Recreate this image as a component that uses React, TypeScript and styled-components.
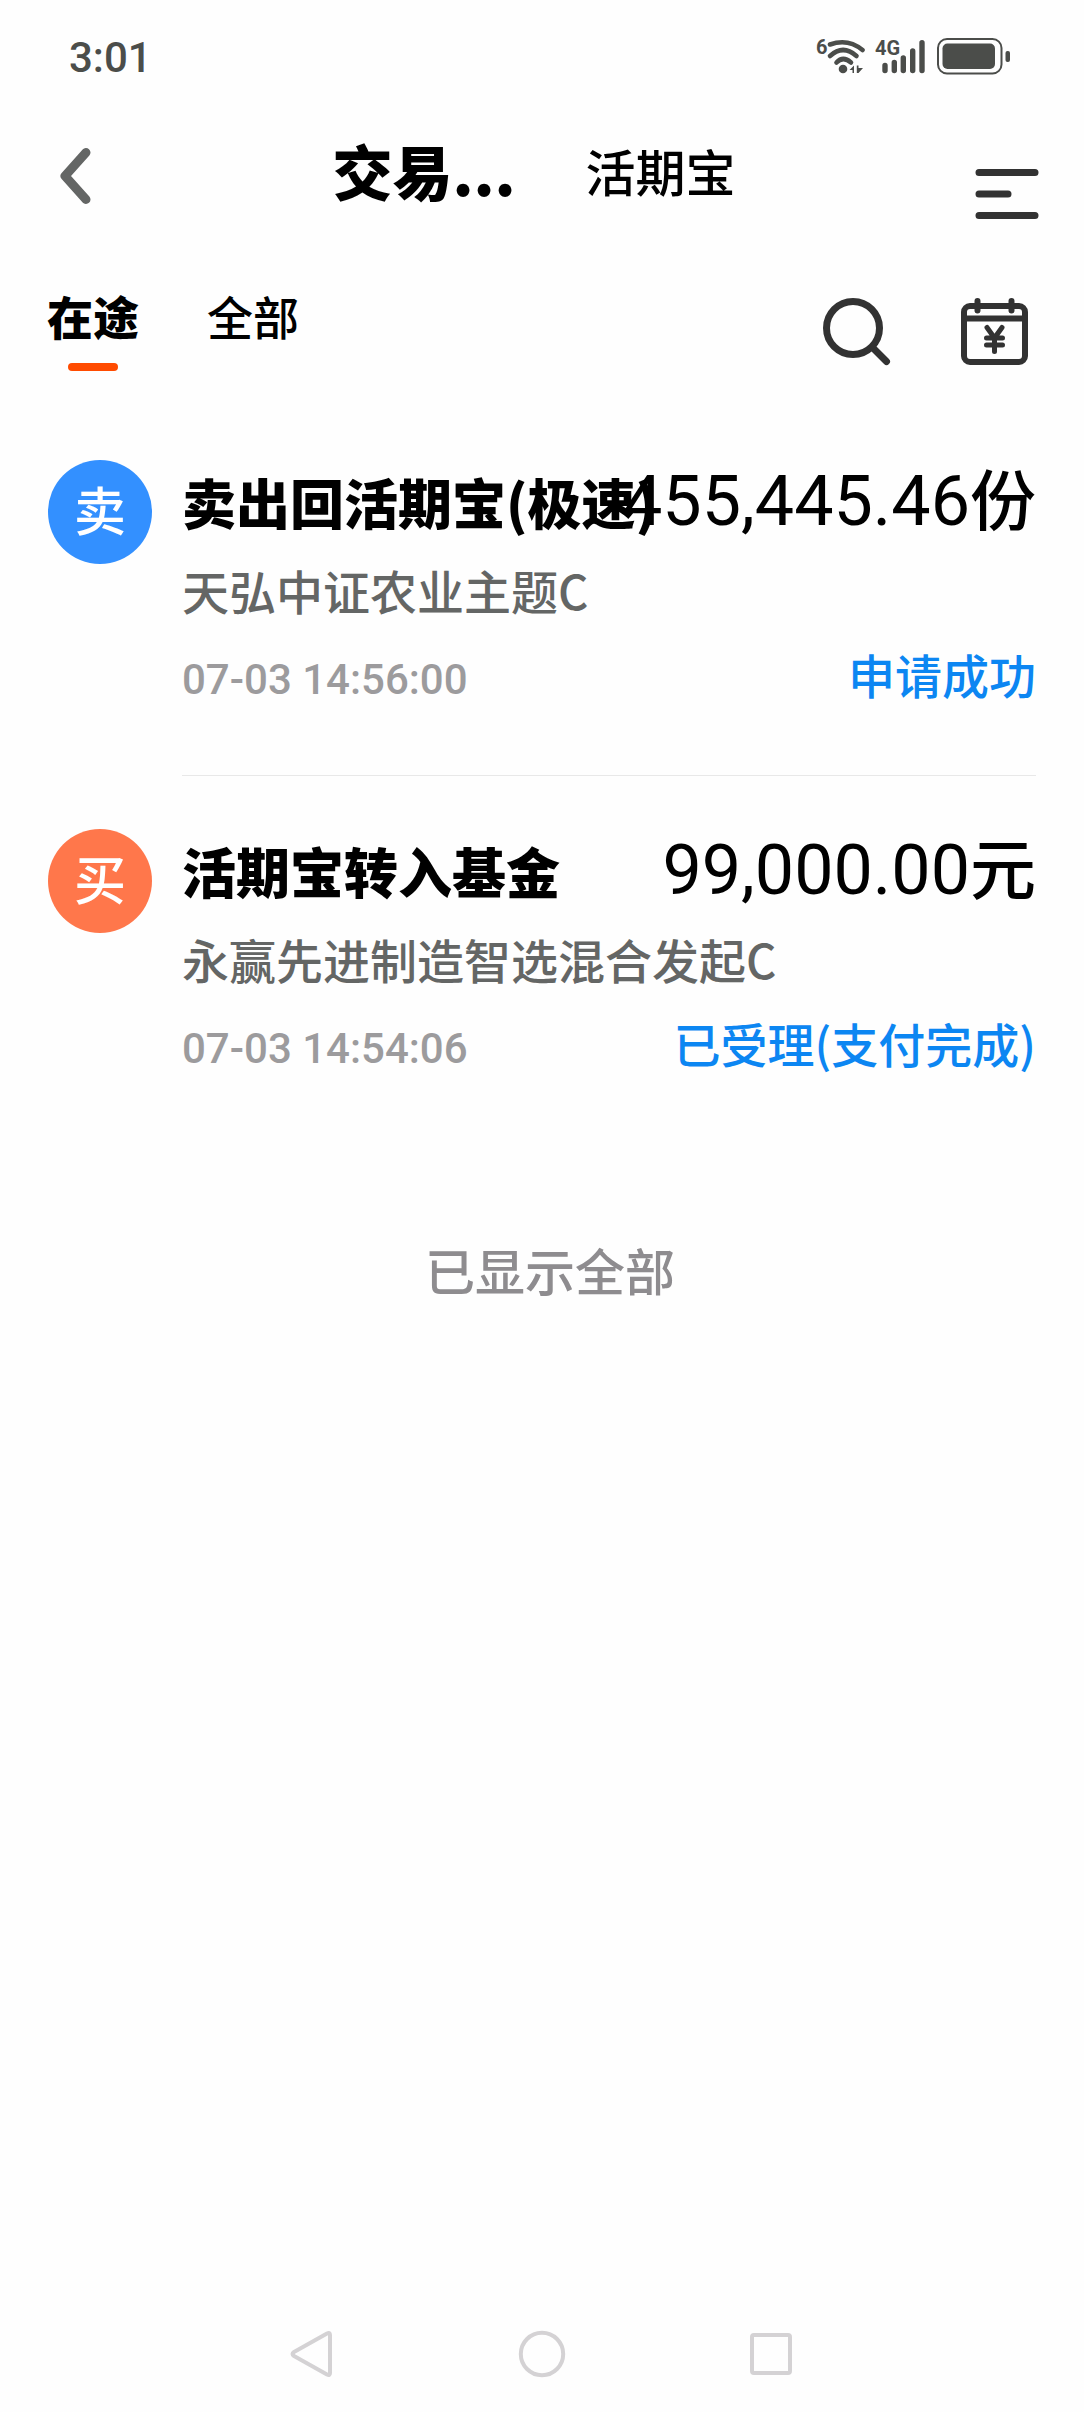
import React from "react";
import styled, { createGlobalStyle } from "styled-components";

const cjk = `"Noto Sans CJK SC", "Noto Sans", sans-serif`;
const latin = `Roboto, "Noto Sans CJK SC", sans-serif`;

const GlobalStyle = createGlobalStyle`
  * { box-sizing: border-box; }
  body { margin: 0; background: #fefefe; color: #000; font-family: ${cjk}; font-weight: 500; }
  button { margin: 0; padding: 0; border: 0; background: none; color: inherit; font: inherit; cursor: pointer; }
  ul { margin: 0; padding: 0; list-style: none; }
  svg { display: block; }
`;

const Page = styled.div`
  display: flex;
  flex-direction: column;
  min-height: 100vh;
`;

const StatusBar = styled.div`
  display: flex;
  align-items: center;
  justify-content: space-between;
  height: 112px;
  padding: 0 74px 0 69px;
  color: #4b4d4a;
`;

const Clock = styled.time`
  padding-top: 4px;
  font: 500 42px/48px ${latin};
`;

const Header = styled.header`
  display: grid;
  grid-template-columns: 1fr auto 1fr;
  align-items: end;
  height: 118px;
  padding: 0 45px 0 29px;
`;

const HeaderButton = styled.button<{ $height: number; $end?: boolean }>`
  display: flex;
  align-items: center;
  justify-self: ${(p) => (p.$end ? "end" : "start")};
  height: ${(p) => p.$height}px;
  padding-left: ${(p) => (p.$end ? 0 : 30)}px;
`;

const Sections = styled.div`
  display: flex;
  align-items: center;
  align-self: stretch;
  gap: 70px;
  padding-bottom: 2px;
`;

const Section = styled.button<{ $active?: boolean }>`
  font-size: ${(p) => (p.$active ? 60 : 50)}px;
  font-weight: ${(p) => (p.$active ? 900 : 500)};
  line-height: 72px;
  white-space: nowrap;
`;

const FilterBar = styled.div`
  display: flex;
  align-items: flex-start;
  justify-content: space-between;
  padding: 52px 56px 0 47px;
`;

const Filters = styled.div`
  display: flex;
  gap: 68px;
`;

const Filter = styled.button<{ $active?: boolean }>`
  display: flex;
  flex-direction: column;
  align-items: center;
  font-size: 46px;
  line-height: 66px;
  font-weight: ${(p) => (p.$active ? 900 : 500)};

  &::after {
    content: "";
    width: 50px;
    height: 8px;
    margin-top: 15px;
    border-radius: 4px;
    background: ${(p) => (p.$active ? "#ff4b00" : "transparent")};
  }
`;

const Tools = styled.div`
  display: flex;
  gap: 70px;
`;

const Tool = styled.button`
  display: flex;
  align-items: center;
  height: 100px;
`;

const Records = styled.ul`
  padding: 25px 48px 0;
`;

const Record = styled.li`
  display: flex;
  gap: 30px;
  padding-top: 53px;
`;

const Badge = styled.span<{ $color: string }>`
  display: flex;
  flex: none;
  align-items: center;
  justify-content: center;
  width: 104px;
  height: 104px;
  padding-bottom: 6px;
  border-radius: 50%;
  background: ${(p) => p.$color};
  color: #fff;
  font-size: 52px;
  line-height: 60px;
`;

const Details = styled.div`
  flex: 1;
  min-width: 0;
  padding-bottom: 56px;

  ${Record}:not(:last-child) & {
    padding-bottom: 55px;
    border-bottom: 1px solid #e8e8e8;
  }
`;

const Line = styled.div<{ $height: number }>`
  display: flex;
  align-items: baseline;
  justify-content: space-between;
  height: ${(p) => p.$height}px;
  white-space: nowrap;
`;

const Title = styled.h2`
  flex: 0 1 auto;
  min-width: 0;
  margin: 0;
  font-size: 54px;
  font-weight: 900;
  line-height: 72px;
`;

const Amount = styled.span`
  flex: none;
  font: 400 70px/72px ${latin};
`;

const Unit = styled.span`
  font: 500 66px/72px ${cjk};
`;

const Fund = styled.span`
  color: #646665;
  font-size: 47px;
  line-height: 84px;
`;

const Time = styled.time`
  color: #9c9b9d;
  font: 500 42px/76px ${latin};
`;

const State = styled.span`
  color: #0c86f2;
  font-size: 47px;
  line-height: 76px;
`;

const EndNote = styled.p`
  margin: 0;
  padding: 88px 0 0 16px;
  color: #8e8c8f;
  font-size: 50px;
  line-height: 72px;
  text-align: center;
`;

const NavBar = styled.nav`
  display: flex;
  align-items: center;
  justify-content: center;
  gap: 182px;
  height: 116px;
  margin-top: auto;
`;

const StatusIcons = () => (
  <svg width="194" height="40" viewBox="816 35 194 40" fill="#4b4d4a" aria-hidden="true">
    <text x="816" y="53" fontFamily="Roboto, sans-serif" fontWeight="700" fontSize="20">6</text>
    <g fill="none" stroke="#4b4d4a" strokeWidth="4.6" strokeLinecap="round">
      <path d="M830 43.5Q848 37 862.500 49" />
      <path d="M830 55Q843 43 856.500 55" />
      <path d="M836.500 61.500Q843 54.500 851 61.500" />
    </g>
    <circle cx="843" cy="68" r="4.300" />
    <path d="M849.500 69L854 64.500V72H852.500V69ZM856.800 64.500H858.500V67H863L858.500 72H856.800Z" />
    <text x="875" y="54" fontFamily="Roboto, sans-serif" fontWeight="700" fontSize="20">4G</text>
    <g stroke="#4b4d4a" strokeWidth="5.400" strokeLinecap="round">
      <path d="M885 64.500V69.500M894.300 61.500V69.500M903.300 57V69.500M912.700 50V69.500M922 41.700V69.500" />
    </g>
    <rect x="938" y="38" width="63.500" height="34.500" rx="9" fill="none" stroke="#4b4d4a" strokeWidth="2" />
    <rect x="942.500" y="42.500" width="52.500" height="25.500" rx="5" />
    <rect x="1005.500" y="50" width="4.500" height="11" rx="2" />
  </svg>
);

const BackIcon = () => (
  <svg width="32" height="58" viewBox="0 0 32 58" fill="none" stroke="#646665" strokeWidth="9" strokeLinecap="round" strokeLinejoin="round" aria-hidden="true">
    <path d="M27 5.500L6 29L27 52.500" />
  </svg>
);

const MenuIcon = () => (
  <svg width="64" height="50" viewBox="0 0 64 50" stroke="#323232" strokeWidth="7" strokeLinecap="round" aria-hidden="true">
    <path d="M4 3.500H60M4 25H33M4 46.500H60" />
  </svg>
);

const SearchIcon = () => (
  <svg width="68" height="68" viewBox="0 0 68 68" fill="none" stroke="#323232" strokeWidth="7" strokeLinecap="round" aria-hidden="true">
    <circle cx="30" cy="30" r="26.500" />
    <path d="M50 50L63.500 63.500" />
  </svg>
);

const CalendarIcon = () => (
  <svg width="67" height="68" viewBox="0 0 67 68" fill="none" stroke="#323232" strokeWidth="6" strokeLinecap="round" strokeLinejoin="round" aria-hidden="true">
    <rect x="3" y="8" width="61" height="56" rx="6" />
    <path d="M4 20.500H63" strokeLinecap="butt" />
    <path d="M16.500 3V12.500M50.500 3V12.500" />
    <path strokeWidth="5" d="M26 29.500L33.500 40L41 29.500M33.500 40V53.500M25.500 40H41.500M25.500 47H41.500" />
  </svg>
);

const NavIcon = ({ children }: { children: React.ReactNode }) => (
  <svg width="48" height="48" viewBox="0 0 48 48" fill="none" stroke="#d4d2d4" strokeWidth="4" strokeLinejoin="round" aria-hidden="true">
    {children}
  </svg>
);

const records = [
  {
    mark: "卖",
    color: "#3390ff",
    title: "卖出回活期宝(极速)",
    amount: "455,445.46",
    unit: "份",
    fund: "天弘中证农业主题C",
    time: "07-03 14:56:00",
    state: "申请成功",
  },
  {
    mark: "买",
    color: "#ff774b",
    title: "活期宝转入基金",
    amount: "99,000.00",
    unit: "元",
    fund: "永赢先进制造智选混合发起C",
    time: "07-03 14:54:06",
    state: "已受理(支付完成)",
  },
];

export default function App() {
  return (
    <Page>
      <GlobalStyle />
      <StatusBar>
        <Clock>3:01</Clock>
        <StatusIcons />
      </StatusBar>
      <Header>
        <HeaderButton type="button" aria-label="返回" $height={108}>
          <BackIcon />
        </HeaderButton>
        <Sections>
          <Section type="button" $active>交易...</Section>
          <Section type="button">活期宝</Section>
        </Sections>
        <HeaderButton type="button" aria-label="菜单" $height={72} $end>
          <MenuIcon />
        </HeaderButton>
      </Header>
      <main>
        <FilterBar>
          <Filters>
            <Filter type="button" $active>在途</Filter>
            <Filter type="button">全部</Filter>
          </Filters>
          <Tools>
            <Tool type="button" aria-label="搜索"><SearchIcon /></Tool>
            <Tool type="button" aria-label="日历"><CalendarIcon /></Tool>
          </Tools>
        </FilterBar>
        <Records>
          {records.map((r) => (
            <Record key={r.time}>
              <Badge $color={r.color}>{r.mark}</Badge>
              <Details>
                <Line $height={88}>
                  <Title>{r.title}</Title>
                  <Amount>{r.amount}<Unit>{r.unit}</Unit></Amount>
                </Line>
                <Line $height={88}>
                  <Fund>{r.fund}</Fund>
                </Line>
                <Line $height={84}>
                  <Time>{r.time}</Time>
                  <State>{r.state}</State>
                </Line>
              </Details>
            </Record>
          ))}
        </Records>
        <EndNote>已显示全部</EndNote>
      </main>
      <NavBar>
        <button type="button" aria-label="后退">
          <NavIcon><path d="M39 3.500Q42 2 42 5V43Q42 46 39 44.500L6 26Q3 24 6 22Z" /></NavIcon>
        </button>
        <button type="button" aria-label="主页">
          <NavIcon><circle cx="24" cy="24" r="21.200" /></NavIcon>
        </button>
        <button type="button" aria-label="最近任务">
          <NavIcon><rect x="4" y="5" width="38" height="38" rx="2" /></NavIcon>
        </button>
      </NavBar>
    </Page>
  );
}
